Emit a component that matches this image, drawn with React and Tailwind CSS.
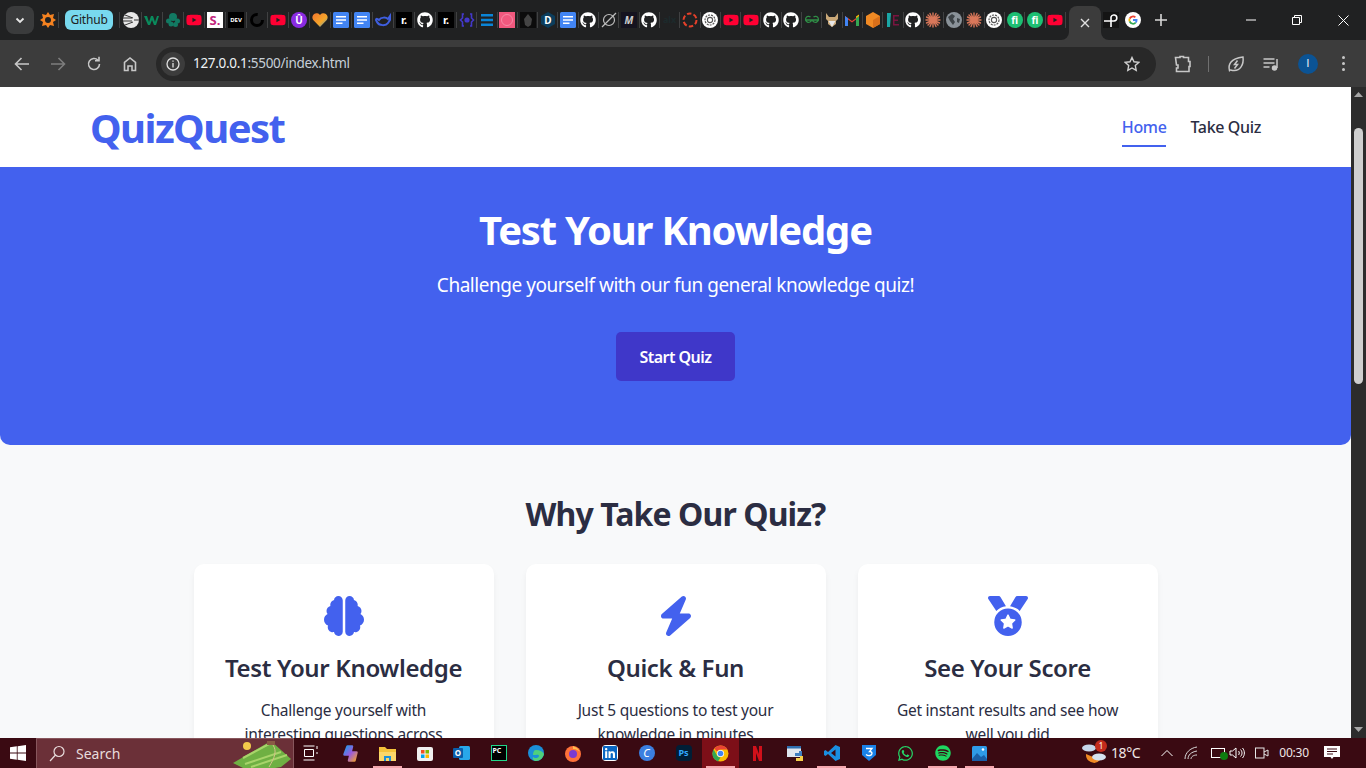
import React from "react";
import { FaBrain, FaBolt, FaMedal, FaGithub, FaYoutube, FaWhatsapp, FaSpotify, FaLinkedin } from "react-icons/fa6";

const FONT = "font-['Noto_Sans','Open_Sans',sans-serif]";

function Gh() {
  return <FaGithub className="w-4 h-4 text-white" />;
}
function Yt() {
  return <FaYoutube className="w-4 h-4 text-[#ff0033]" />;
}
function Docs() {
  return (
    <svg width="16" height="16" viewBox="0 0 16 16"><rect width="16" height="16" rx="1.5" fill="#4285f4" /><path d="M3 4h10v1.5H3zM3 7.2h10v1.5H3zM3 10.4h6.5v1.5H3z" fill="#fff" /></svg>
  );
}
function Rr() {
  return <div className="w-4 h-4 bg-black text-white text-[11px] font-bold leading-4 text-center">r.</div>;
}
function OpenAi() {
  return (
    <svg width="16" height="16" viewBox="0 0 16 16"><circle cx="8" cy="8" r="8" fill="#fff" /><circle cx="8" cy="8" r="5" fill="none" stroke="#555" strokeWidth="1.2" strokeDasharray="2 1" /><circle cx="8" cy="8" r="2.6" fill="none" stroke="#555" strokeWidth="1.1" /></svg>
  );
}
function Burst() {
  return (
    <svg width="16" height="16" viewBox="0 0 16 16" stroke="#d9775a" strokeWidth="1.4" strokeLinecap="round"><path d="M8 1v14M1 8h14M3 3l10 10M13 3L3 13M5 1.5l6 13M11 1.5l-6 13M1.5 5l13 6M1.5 11l13-6" /></svg>
  );
}
function Fi() {
  return <div className="w-4 h-4 rounded-full bg-[#1dbf73] text-white text-[10px] font-bold leading-4 text-center">fi</div>;
}

const tabs = [
  <svg width="16" height="16" viewBox="0 0 16 16"><circle cx="8" cy="8" r="8" fill="#e8e8e8" /><path d="M0 6h9M0 9h9M2 3l8 3M2 13l8-3M11 8h5" stroke="#333" strokeWidth="1" /></svg>,
  <svg width="16" height="16" viewBox="0 0 16 16"><path d="M0 4h3l2 6 2-6h2l2 6 2-6h2l-3 9h-2L8 8l-2 5H4z" fill="#0a8a5c" /></svg>,
  <svg width="16" height="16" viewBox="0 0 16 16" fill="#127a63"><circle cx="8" cy="5" r="4" /><circle cx="3.5" cy="9" r="2.5" /><circle cx="12.5" cy="9" r="2.5" /><circle cx="6" cy="12" r="2.5" /><circle cx="10.5" cy="12.5" r="2.5" /></svg>,
  <Yt />,
  <div className="w-4 h-4 bg-white text-[#c2267d] text-[13px] font-bold leading-4 text-center">S.</div>,
  <div className="w-4 h-4 bg-black text-white text-[6px] font-bold leading-4 text-center">DEV</div>,
  <svg width="16" height="16" viewBox="0 0 16 16"><circle cx="8" cy="8" r="5.5" fill="none" stroke="#000" strokeWidth="3" strokeDasharray="26 9" /></svg>,
  <Yt />,
  <div className="w-4 h-4 rounded-full bg-[#8a2be2] text-white text-[10px] font-bold leading-4 text-center">Û</div>,
  <svg width="16" height="16" viewBox="0 0 16 16"><defs><linearGradient id="ht" x1="0" y1="0" x2="1" y2="1"><stop offset="0" stopColor="#f2762e" /><stop offset="0.6" stopColor="#f4a62a" /><stop offset="1" stopColor="#3c9cd8" /></linearGradient></defs><path d="M8 15L1.2 8A4.2 4.2 0 0 1 8 3a4.2 4.2 0 0 1 6.8 5z" fill="url(#ht)" /></svg>,
  <Docs />,
  <Docs />,
  <svg width="16" height="16" viewBox="0 0 16 16"><path d="M1 8c0-2 2-1 3 0 2-3 7-3 9-1l2-3v4l-2 3c-2 3-9 3-11-1z" fill="none" stroke="#3f5fe0" strokeWidth="2" /></svg>,
  <Rr />,
  <Gh />,
  <Rr />,
  <svg width="16" height="16" viewBox="0 0 16 16" fill="none" stroke="#4338ca" strokeWidth="1.6"><path d="M5 2H3.5v4L1.5 8l2 2v4H5M11 2h1.5v4l2 2-2 2v4H11" /><circle cx="8" cy="8" r="1.8" fill="#4338ca" /></svg>,
  <svg width="16" height="16" viewBox="0 0 16 16"><path d="M2 2h12v2.5H2zM2 6.8h12v2.5H2zM2 11.5h12V14H2z" fill="#0a84d6" /></svg>,
  <svg width="16" height="16" viewBox="0 0 16 16"><rect width="16" height="16" fill="#f0587e" /><circle cx="8" cy="8" r="5.5" fill="none" stroke="#f58aa5" strokeWidth="1" /></svg>,
  <svg width="16" height="16" viewBox="0 0 16 16"><rect width="16" height="16" fill="#0c0c0c" /><path d="M8 2l4 5-1 6-3 2-3-2-1-6z" fill="#444" /></svg>,
  <svg width="16" height="16" viewBox="0 0 16 16"><path d="M8 0l7 4v8l-7 4-7-4V4z" fill="#0b3d5c" /><text x="8" y="11.5" textAnchor="middle" fill="#fff" fontSize="10" fontWeight="700">D</text></svg>,
  <Docs />,
  <Gh />,
  <svg width="16" height="16" viewBox="0 0 16 16" fill="none" stroke="#bdbdbd" strokeWidth="1.2"><circle cx="8" cy="8" r="5.5" /><path d="M1 15L15 1" /></svg>,
  <div className="w-4 h-4 bg-[#15131f] text-[#cfcfcf] text-[10px] italic font-bold leading-4 text-center">M</div>,
  <Gh />,
  <div className="w-4 h-4 text-[#1c2a2c] text-[9px] font-bold leading-4 text-center">alx</div>,
  <svg width="16" height="16" viewBox="0 0 16 16"><circle cx="8" cy="8" r="6.5" fill="none" stroke="#e5402a" strokeWidth="2" strokeDasharray="4.5 2.2" /></svg>,
  <OpenAi />,
  <Yt />,
  <Yt />,
  <Gh />,
  <Gh />,
  <svg width="16" height="16" viewBox="0 0 16 16" fill="none" stroke="#2f8d46" strokeWidth="1.3"><path d="M1 8h14M7.5 8a3 3 0 1 1-1-3M8.5 8a3 3 0 1 0 1-3" /></svg>,
  <svg width="16" height="16" viewBox="0 0 16 16"><path d="M2 1l3 4h6l3-4v6l-2 2v3l-4 3-4-3V9L2 7z" fill="#c9a878" /><path d="M4.5 9L8 15l3.5-6z" fill="#e8e8e8" /></svg>,
  <svg width="16" height="16" viewBox="0 0 16 16"><path d="M1 14V4l7 5 7-5v10h-3V7.500L8 10.500 4 7.500V14z" fill="#ea4335" /><path d="M1 14V4l3 2.200V14z" fill="#4285f4" /><path d="M15 14V4l-3 2.200V14z" fill="#34a853" /><path d="M12 6.200L15 4V2.500L12 4.500z" fill="#fbbc04" /></svg>,
  <svg width="16" height="16" viewBox="0 0 16 16"><path d="M8 0l7 4v8l-7 4-7-4V4z" fill="#f08a24" /><path d="M8 8l7-4v8l-7 4z" fill="#d9701a" /></svg>,
  <svg width="16" height="16" viewBox="0 0 16 16"><path d="M2 1h4l-1 14H2z" fill="#1aa6a6" /><path d="M8 3h6v1.500H9.500v3H13V9H9.500v3H14v1.500H8z" fill="#7a1440" /></svg>,
  <Gh />,
  <Burst />,
  <svg width="16" height="16" viewBox="0 0 16 16"><circle cx="8" cy="8" r="8" fill="#8a9299" /><path d="M2 5l4-3 3 2-2 3 2 3-2 3-3-4zM11 6l3 1-1 4-2-1z" fill="#3d4347" /></svg>,
  <Burst />,
  <OpenAi />,
  <Fi />,
  <Fi />,
  <Yt />,
];

function Sep() {
  return <div className="w-px h-4 bg-[#404142] shrink-0" />;
}

function TabStrip() {
  return (
    <div className="h-10 shrink-0 bg-[#202122] flex items-center text-white">
      <div className="ml-1.5 w-7 h-7 rounded-lg bg-[#3a3b3c] flex items-center justify-center shrink-0">
        <svg width="12" height="12" viewBox="0 0 12 12" fill="none" stroke="#e6e6e6" strokeWidth="1.8"><path d="M2.500 4.500L6 8l3.500-3.500" /></svg>
      </div>
      <div className="w-6 pl-1 flex justify-center shrink-0"><svg width="16" height="16" viewBox="0 0 16 16"><path d="M8 0l2 3 4-1-1 4 3 2-3 2 1 4-4-1-2 3-2-3-4 1 1-4-3-2 3-2-1-4 4 1z" fill="#f58220" /><circle cx="8" cy="8" r="3" fill="#202122" /></svg></div>
      <Sep />
      <div className="ml-1.5 w-12 h-5 rounded-md bg-[#78d9ee] text-[#202122] text-xs leading-5 text-center shrink-0 tracking-[-0.2px]">Github</div>
      <div className="ml-1.5 shrink-0"><Sep /></div>
      <div className="flex items-center shrink-0 ml-px">
        {tabs.map((t, i) => (
          <div key={i} className={`h-4 flex items-center justify-center relative shrink-0 border-r border-[#404142] ${i < 16 ? "w-[21px]" : "w-[20.31px]"}`}>{t}</div>
        ))}
      </div>
      <div className="relative ml-[3px] w-8 h-[34px] self-end rounded-t-lg bg-[#3c3c3c] flex items-center justify-center shrink-0">
        <div className="absolute -left-2 bottom-0 w-2 h-2 bg-[#3c3c3c]"><div className="w-2 h-2 rounded-br-lg bg-[#202122]" /></div>
        <div className="absolute -right-2 bottom-0 w-2 h-2 bg-[#3c3c3c]"><div className="w-2 h-2 rounded-bl-lg bg-[#202122]" /></div>
        <svg width="10" height="10" viewBox="0 0 10 10" stroke="#e0e0e0" strokeWidth="1.4"><path d="M1 1l8 8M9 1L1 9" /></svg>
      </div>
      <div className="w-[21px] flex justify-center shrink-0">
        <svg width="16" height="16" viewBox="0 0 16 16" fill="none" stroke="#fff" strokeWidth="1.6"><rect width="16" height="16" fill="#141414" stroke="none" /><path d="M1 9h10M8 15V5a3 3 0 1 1 3 4" /></svg>
      </div>
      <div className="w-[22px] flex justify-center shrink-0">
        <svg width="16" height="16" viewBox="0 0 16 16"><circle cx="8" cy="8" r="8" fill="#fff" /><path d="M8 3.500a4.500 4.500 0 0 1 3 1.200l-1.300 1.300A2.700 2.700 0 0 0 5.400 7.200L3.900 6A4.500 4.500 0 0 1 8 3.500z" fill="#ea4335" /><path d="M3.900 6l1.500 1.200a2.700 2.700 0 0 0 0 1.600L3.900 10a4.500 4.500 0 0 1 0-4z" fill="#fbbc04" /><path d="M3.900 10l1.500-1.200A2.700 2.700 0 0 0 10 10l1.400 1.100A4.500 4.500 0 0 1 3.900 10z" fill="#34a853" /><path d="M12.500 8c0-.3 0-.6-.1-.9H8v1.800h2.500a2.200 2.200 0 0 1-.5 1.100l1.400 1.100A4.500 4.500 0 0 0 12.500 8z" fill="#4285f4" /></svg>
      </div>
      <div className="ml-[6px] w-[22px] flex justify-center shrink-0">
        <svg width="14" height="14" viewBox="0 0 14 14" stroke="#d8d8d8" strokeWidth="1.6"><path d="M7 1v12M1 7h12" /></svg>
      </div>
      <div className="ml-auto flex items-center shrink-0">
        <div className="w-[46px] flex justify-center"><svg width="10" height="10" viewBox="0 0 10 10" stroke="#fff"><path d="M0 5h10" /></svg></div>
        <div className="w-[46px] flex justify-center"><svg width="10" height="10" viewBox="0 0 10 10" fill="none" stroke="#fff"><path d="M.5 2.500h7v7h-7zM2.500 2.500v-2h7v7h-2" /></svg></div>
        <div className="w-[46px] flex justify-center"><svg width="11" height="11" viewBox="0 0 11 11" stroke="#fff"><path d="M.5.500l10 10M10.500.500l-10 10" /></svg></div>
      </div>
    </div>
  );
}

function Toolbar() {
  return (
    <div className="h-[47px] shrink-0 bg-[#3c3c3c] flex items-center text-[#c7c7c7]">
      <div className="ml-3 flex items-center gap-4 shrink-0">
        <svg width="20" height="20" viewBox="0 0 20 20" fill="none" stroke="#c7c7c7" strokeWidth="1.6"><path d="M17 10H4M9.500 4L3.500 10l6 6" /></svg>
        <svg width="20" height="20" viewBox="0 0 20 20" fill="none" stroke="#7d7d7d" strokeWidth="1.6"><path d="M3 10h13M10.500 4l6 6-6 6" /></svg>
        <svg width="20" height="20" viewBox="0 0 20 20" fill="none" stroke="#c7c7c7" strokeWidth="1.6"><path d="M15.500 10A5.500 5.500 0 1 1 14 6.200M15 2.800v4h-4" /></svg>
        <svg width="20" height="20" viewBox="0 0 20 20" fill="none" stroke="#c7c7c7" strokeWidth="1.6"><path d="M4.500 16.500V8.500L10 4l5.500 4.500v8h-3.500v-4.500H8v4.500z" /></svg>
      </div>
      <div className="ml-4 w-[1000px] h-[34px] rounded-full bg-[#282828] flex items-center shrink-0">
        <div className="ml-[5px] w-6 h-6 rounded-full bg-[#3c3c3c] flex items-center justify-center shrink-0">
          <svg width="14" height="14" viewBox="0 0 14 14" fill="none" stroke="#e0e0e0" strokeWidth="1.3"><circle cx="7" cy="7" r="6" /><path d="M7 6v4.500M7 3.500v1.300" /></svg>
        </div>
        <div className="ml-2 text-[13.5px] leading-none text-[#c7d0d8] tracking-[-0.3px]"><span className="text-[#eef2f5]">127.0.0.1</span>:5500/index.html</div>
        <svg className="ml-auto mr-4" width="16" height="16" viewBox="0 0 16 16" fill="none" stroke="#d0d0d0" strokeWidth="1.4"><path d="M8 1.500l2 4.300 4.700.6-3.400 3.200.9 4.700L8 12l-4.200 2.300.9-4.700L1.300 6.400 6 5.800z" /></svg>
      </div>
      <svg className="ml-[17px]" width="20" height="20" viewBox="0 0 20 20" fill="none" stroke="#c7c7c7" strokeWidth="1.6"><path d="M2.500 3.500h4.500v-1h3.500v1h5v4h1.500v5H16v5H3.500v-3.500h1.500v-3h-1.500z" /></svg>
      <div className="ml-[15px] w-px h-4 bg-[#707070]" />
      <svg className="ml-[17px]" width="20" height="20" viewBox="0 0 20 20" fill="none" stroke="#c7c7c7" strokeWidth="1.5"><path d="M3.500 16.500C2 11 4 4.500 17 3c1 8-3 14-9.500 13.500-2 0-3-1-4-0z" /><path d="M11.500 6.500l-3 4h3l-3 4" /></svg>
      <svg className="ml-[16px]" width="18" height="18" viewBox="0 0 18 18" fill="none" stroke="#c7c7c7" strokeWidth="1.5"><path d="M1.500 4h11M1.500 8h11M1.500 12h6M15 4v9" /><circle cx="12.500" cy="13" r="2" fill="#c7c7c7" /></svg>
      <div className="ml-[18px] w-5 h-5 rounded-full bg-[#0b5394] text-white text-[10px] leading-5 text-center font-['Liberation_Sans',sans-serif]">I</div>
      <div className="ml-[24px] flex flex-col gap-[3px]">
        <div className="w-[3px] h-[3px] rounded-full bg-[#c7c7c7]" />
        <div className="w-[3px] h-[3px] rounded-full bg-[#c7c7c7]" />
        <div className="w-[3px] h-[3px] rounded-full bg-[#c7c7c7]" />
      </div>
    </div>
  );
}

function Card({ icon, title, lines }) {
  return (
    <div className="w-[300px] h-[230px] shrink-0 bg-white rounded-[10px] shadow-[0_4px_6px_rgba(0,0,0,0.05)] pt-8 px-8 text-center">
      <div className="h-10 flex justify-center text-[#4361ee] text-[40px]">{icon}</div>
      <h3 className="mt-[14px] -mx-4 whitespace-nowrap text-2xl leading-9 font-semibold text-[#2b2d42] tracking-[-0.35px]">{title}</h3>
      <p className="mt-3 text-[15.5px] leading-6 text-[#2b2d42] tracking-[-0.24px]">{lines}</p>
    </div>
  );
}

function Page() {
  return (
    <div className="flex-1 min-w-0 bg-[#f8f9fa] overflow-hidden">
      <nav className="h-20 bg-white flex items-center justify-between pl-[90px] pr-[90px]">
        <div className="pt-0.5 text-[40px] leading-none font-bold text-[#4361ee] tracking-[-1.55px]">QuizQuest</div>
        <div className="flex gap-6 text-base font-medium tracking-[-0.35px]">
          <div className="h-10 leading-[40px] text-[#4361ee] border-b-2 border-[#4361ee]">Home</div>
          <div className="h-10 leading-[40px] text-[#2b2d42]">Take Quiz</div>
        </div>
      </nav>
      <section className="h-[278px] bg-[#4361ee] rounded-b-[10px] flex flex-col items-center text-white">
        <h1 className="mt-9 text-[40px] leading-[54px] font-bold tracking-[-1.2px]">Test Your Knowledge</h1>
        <p className="mt-3.5 text-[19px] leading-7 tracking-[-0.47px]">Challenge yourself with our fun general knowledge quiz!</p>
        <div className="mt-[33px] w-[119px] h-[49px] rounded-[5px] bg-[#3f37c9] text-base font-semibold leading-[51px] text-center tracking-[-0.55px]">Start Quiz</div>
      </section>
      <section className="pt-[47px]">
        <h2 className="text-center text-[32px] leading-[44px] font-bold text-[#2b2d42] tracking-[-0.9px]">Why Take Our Quiz?</h2>
        <div className="mt-[28px] flex justify-center gap-8">
          <Card icon={<FaBrain />} title="Test Your Knowledge" lines="Challenge yourself with interesting questions across" />
          <Card icon={<FaBolt />} title="Quick & Fun" lines="Just 5 questions to test your knowledge in minutes" />
          <Card icon={<FaMedal />} title="See Your Score" lines="Get instant results and see how well you did" />
        </div>
      </section>
    </div>
  );
}

function Scrollbar() {
  return (
    <div className="w-[15px] shrink-0 bg-[#2c2c2c] flex flex-col items-center relative">
      <svg className="mt-[5px] shrink-0" width="9" height="5" viewBox="0 0 9 5"><path d="M4.500 0L9 5H0z" fill="#a6a6a6" /></svg>
      <div className="mt-[31px] w-[9px] h-[256px] rounded-full bg-[#cfcfcf] shrink-0" />
      <svg className="mt-auto mb-[6px] shrink-0" width="9" height="5" viewBox="0 0 9 5"><path d="M4.500 5L9 0H0z" fill="#a6a6a6" /></svg>
    </div>
  );
}

const T = ({ children, active, on, first }) => (
  <div className={`w-[37px] h-[30px] flex items-center justify-center relative shrink-0 ${active ? "bg-[#7d0f18]" : ""} ${first ? "-ml-[2px]" : ""}`}>
    {children}
    {on && <div className="absolute bottom-0 left-[4px] right-[4px] h-[2px] bg-[#f4a6ad]" />}
  </div>
);

function Taskbar() {
  return (
    <div className="h-[30px] shrink-0 bg-[#3a0a12] flex items-center text-white overflow-hidden">
      <div className="w-9 flex justify-center shrink-0">
        <svg width="16" height="16" viewBox="0 0 16 16" fill="#fff"><path d="M0 2.300l6.800-1v6.300H0zM7.600 1.200L16 0v7.600H7.600zM0 8.400h6.800v6.300l-6.800-1zM7.600 8.400H16V16l-8.400-1.200z" /></svg>
      </div>
      <div className="relative w-[258px] h-[30px] bg-[#6b3038] border border-b-0 border-[#87565c] flex items-center shrink-0">
        <svg className="ml-3" width="17" height="17" viewBox="0 0 17 17" fill="none" stroke="#e8dcdc" strokeWidth="1.2"><circle cx="10" cy="6.500" r="5" /><path d="M6.500 10L1 16" /></svg>
        <div className="ml-2.5 text-sm text-[#e8dcdc]">Search</div>
        <svg className="absolute right-0 top-0" width="60" height="30" viewBox="0 0 60 30"><circle cx="14" cy="7" r="4" fill="#f3c94b" /><path d="M0 24L38 2l20 18-10 8-12 2H12z" fill="#6fb043" /><path d="M10 19l26-14M12 25l36-12M18 28l36-12" stroke="#a8d46a" strokeWidth="2" fill="none" /><path d="M40 6c4 6 2 12-4 22" stroke="#d6c08a" fill="none" /><rect x="34" y="2" width="8" height="4" fill="#8a5a44" /></svg>
      </div>
      <T first><svg width="16" height="16" viewBox="0 0 16 16" fill="none" stroke="#fff"><path d="M.5 1h11M.5 15h11M1.500 4.500h9v7h-9zM14 1v3M14 7v2" /></svg></T>
      <div className="ml-[3px]" />
      <T><svg width="17" height="17" viewBox="0 0 17 17"><defs><linearGradient id="cp" x1="0" y1="0" x2="1" y2="1"><stop offset="0" stopColor="#1e9be8" /><stop offset="0.5" stopColor="#9a5be0" /><stop offset="1" stopColor="#f0a030" /></linearGradient></defs><path d="M5.500 1.500h4.500l-1.500 6h6l-2 8H7l1.500-6h-6z" fill="url(#cp)" stroke="url(#cp)" strokeWidth="2.500" strokeLinejoin="round" /></svg></T>
      <T on><svg width="17" height="15" viewBox="0 0 17 15"><path d="M0 1h6l2 2h9v12H0z" fill="#f5c33b" /><path d="M0 6h17v9H0z" fill="#fbd769" /><path d="M5 15V10h7v5h-2v-3H7v3z" fill="#1d90d8" /></svg></T>
      <T><svg width="16" height="16" viewBox="0 0 16 16"><rect y="2" width="16" height="14" rx="2" fill="#f0f0f0" /><rect x="4" y="5" width="3.500" height="3.500" fill="#f25022" /><rect x="8.500" y="5" width="3.500" height="3.500" fill="#7fba00" /><rect x="4" y="9.500" width="3.500" height="3.500" fill="#00a4ef" /><rect x="8.500" y="9.500" width="3.500" height="3.500" fill="#ffb900" /></svg></T>
      <T><svg width="17" height="16" viewBox="0 0 17 16"><rect x="6" y="1" width="11" height="14" rx="1.500" fill="#28a8ea" /><rect y="3" width="10" height="10" rx="1" fill="#0a5ca8" /><text x="5" y="11" textAnchor="middle" fontSize="8" fontWeight="700" fill="#fff">O</text></svg></T>
      <T><div className="w-4 h-4 bg-black border border-[#21d789] text-white text-[7px] font-bold leading-[9px] pl-[1px]">PC</div></T>
      <T><svg width="16" height="16" viewBox="0 0 16 16"><circle cx="8" cy="8" r="8" fill="#1b8fd8" /><path d="M8 5c4 0 7 2 8 4-1 4-4 7-8 7-2 0-4-2-3-4 1 1 5 2 6-1 0-2-3-1-6-1 0-3 1-5 3-5z" fill="#4fd07c" /></svg></T>
      <T><svg width="16" height="17" viewBox="0 0 16 17"><circle cx="8" cy="9" r="8" fill="#ff7139" /><circle cx="8" cy="9" r="4" fill="#7b3bd0" /><path d="M8 1c3 1 6 3 7 6-1-1-3-3-7-3z" fill="#ffbd4f" /></svg></T>
      <T><FaLinkedin className="w-4 h-4 text-[#0a66c2] bg-white rounded-sm" /></T>
      <T><div className="w-4 h-4 rounded-full bg-[#3b7fe0] text-white text-[11px] italic leading-4 text-center">C</div></T>
      <T><div className="w-4 h-4 rounded-sm bg-[#001e36] text-[#31a8ff] text-[9px] font-bold leading-4 text-center">Ps</div></T>
      <T active on><svg width="17" height="17" viewBox="0 0 17 17"><circle cx="8.500" cy="8.500" r="8" fill="#fbbc04" /><path d="M8.500.500a8 8 0 0 1 7 4H8.500a4 4 0 0 0-3.500 2L2.300 3.500A8 8 0 0 1 8.500.500z" fill="#ea4335" /><path d="M1.600 4.500l3.400 6a4 4 0 0 0 3.500 2L6 16.400A8 8 0 0 1 1.600 4.500z" fill="#34a853" /><circle cx="8.500" cy="8.500" r="3.600" fill="#fff" /><circle cx="8.500" cy="8.500" r="2.800" fill="#4285f4" /></svg></T>
      <T><svg width="9" height="15" viewBox="0 0 9 15"><path d="M0 0h3l3 8V0h3v15H6L3 7v8H0z" fill="#d1101a" /></svg></T>
      <T><svg width="16" height="16" viewBox="0 0 16 16"><rect y="1" width="14" height="11" fill="#dfe6ee" /><rect y="1" width="14" height="2.500" fill="#2f6fb0" /><path d="M8 8h4V6h3v5H8z" fill="#3f7fc0" /><path d="M9 13h4v-2h3v5H9z" fill="#f6d04a" /></svg></T>
      <T on><svg width="16" height="16" viewBox="0 0 16 16"><path d="M11.500 0L16 2v12l-4.500 2L4 9l-2.500 2L0 10V6l1.500-1L4 7zM11.500 4.500L7 8l4.500 3.500z" fill="#1a8fe0" /></svg></T>
      <T><svg width="14" height="16" viewBox="0 0 14 16"><path d="M0 0h14v10l-7 6-7-6z" fill="#1a82e8" /><path d="M4 3.500h6L7.500 6.500c2 0 2.500 1 2.500 2 0 2-3.500 3-6 1" fill="none" stroke="#fff" strokeWidth="1.300" /></svg></T>
      <T><FaWhatsapp className="w-[17px] h-[17px] text-[#25d366]" /></T>
      <T on><FaSpotify className="w-4 h-4 text-[#1ed760]" /></T>
      <T on><svg width="15" height="15" viewBox="0 0 15 15"><rect width="15" height="15" rx="1.500" fill="#2f9be8" /><path d="M0 13l5-6 4 4 3-2 3 4v2H0z" fill="#1a5fa8" /><circle cx="11" cy="3.500" r="1.300" fill="#fff" /></svg></T>
      <div className="ml-[84px] relative w-6 h-6 shrink-0">
        <svg width="24" height="24" viewBox="0 0 24 24"><path d="M4 13a8 8 0 0 0 14 6z" fill="#f08a24" /><ellipse cx="7" cy="7" rx="7" ry="3.500" fill="#c5d6ea" /><ellipse cx="17" cy="16" rx="7" ry="3.500" fill="#d6e2ef" /></svg>
        <div className="absolute -top-[1px] -right-[1px] w-3 h-3 rounded-full bg-[#c42b1c] text-white text-[8px] leading-3 text-center">1</div>
      </div>
      <div className="ml-[5px] text-sm leading-none text-[#f0e6e6] tracking-[-0.4px] shrink-0">18°C</div>
      <svg className="ml-[21px] shrink-0" width="12" height="8" viewBox="0 0 12 8" fill="none" stroke="#fff"><path d="M.5 7L6 1.500 11.500 7" /></svg>
      <svg className="ml-[11px] shrink-0" width="14" height="14" viewBox="0 0 14 14" fill="none" stroke="#d8d8d8"><path d="M1 13C1 7 6 2 13 1M4 13c0-4 3-7 9-8M7 13c0-2 2-4 6-4" /></svg>
      <div className="ml-[13px] w-[14px] h-[10px] border border-white relative shrink-0"><div className="absolute -right-1 top-[3px] w-[8px] h-[8px] rounded-full bg-[#107c10]" /></div>
      <svg className="ml-[4px] shrink-0" width="16" height="14" viewBox="0 0 16 14" fill="none" stroke="#fff"><path d="M1 5h2.500L7 2v10L3.500 9H1zM9.500 5c1 1 1 3 0 4M11.500 3.500c2 2 2 5 0 7M13.500 2c2.500 3 2.500 7 0 10" /></svg>
      <svg className="ml-[10px] shrink-0" width="14" height="16" viewBox="0 0 14 16" fill="none" stroke="#e8e8e8"><rect x=".5" y="3" width="8.500" height="10" /><path d="M9 7l4-2v6l-4-2" /></svg>
      <div className="ml-[10px] text-xs leading-none text-[#f0e6e6] shrink-0 tracking-[-0.2px]">00:30</div>
      <svg className="ml-[15px] shrink-0" width="16" height="16" viewBox="0 0 16 16"><path d="M0 1h16v11H9.500L8 14l-1.500-2H0z" fill="#fff" /><path d="M3 4h10M3 6.500h10M3 9h6" stroke="#3a0a12" /></svg>
    </div>
  );
}

export default function App() {
  return (
    <div className={`h-screen w-[1366px] flex flex-col overflow-hidden ${FONT}`}>
      <TabStrip />
      <Toolbar />
      <div className="flex-1 min-h-0 flex">
        <Page />
        <Scrollbar />
      </div>
      <Taskbar />
    </div>
  );
}
